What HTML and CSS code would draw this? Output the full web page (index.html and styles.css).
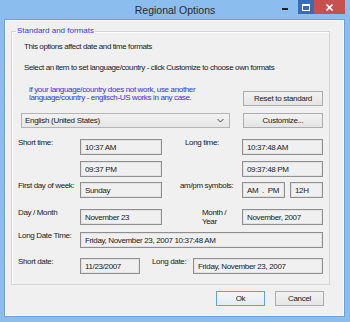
FILE: index.html
```html
<!DOCTYPE html>
<html lang="en">
<head>
    <meta charset="UTF-8">
    <title>Regional Options</title>
    <link rel="stylesheet" href="styles.css">
</head>
<body>

<div class="window">
    <div class="titlebar">
        <span></span>
        <div class="title">Regional Options</div>
        <div class="controls">
            <span class="ctl ctl-min"><i></i></span>
            <span class="ctl ctl-max">
                <svg width="8" height="7" viewBox="0 0 8 7"><rect x="0.5" y="0.5" width="7" height="6" fill="none" stroke="#fff"/><rect x="0" y="0" width="8" height="2" fill="#fff"/></svg>
            </span>
            <span class="ctl ctl-close">
                <svg width="7" height="7" viewBox="0 0 7 7"><path d="M0.5 0.5 L6.5 6.5 M6.5 0.5 L0.5 6.5" stroke="#fff" stroke-width="1.6"/></svg>
            </span>
        </div>
    </div>

    <div class="client">
        <fieldset class="group">
            <legend>Standard and formats</legend>
            <p class="note">This options affect date and time formats</p>
            <p class="note note-2">Select an item to set language/country - click Customize to choose own formats</p>

            <div class="lang-row">
                <p class="hint">if your language/country does not work, use another<br>language/country - englisch-US works in any case.</p>
                <button class="btn btn-side btn-reset">Reset to standard</button>
            </div>
            <div class="lang-row lang-row-2">
                <div class="combo">
                    <span>English (United States)</span>
                    <svg width="7" height="5" viewBox="0 0 7 5"><path d="M0.5 1 L3.5 4 L6.5 1" fill="none" stroke="#444" stroke-width="1"/></svg>
                </div>
                <button class="btn btn-side">Customize...</button>
            </div>

            <!-- Format fields -->
            <div class="row r1">
                <span class="lbl">Short time:</span>
                <div class="box">10:37 AM</div>
                <span class="lbl2 lbl-long">Long time:</span>
                <div class="box box-r">10:37:48 AM</div>
            </div>
            <div class="row r2">
                <span class="lbl"></span>
                <div class="box">09:37 PM</div>
                <span class="lbl2"></span>
                <div class="box box-r">09:37:48 PM</div>
            </div>
            <div class="row r3">
                <span class="lbl">First day of week:</span>
                <div class="box">Sunday</div>
                <span class="lbl2 lbl-ampm">am/pm symbols:</span>
                <div class="box box-ampm">AM  .  PM</div>
                <div class="box box-12">12H</div>
            </div>
            <div class="row r4">
                <span class="lbl">Day / Month</span>
                <div class="box">November 23</div>
                <span class="lbl2 lbl-my">Month /<br>Year</span>
                <div class="box box-r">November, 2007</div>
            </div>
            <div class="row r5">
                <span class="lbl">Long Date Time:</span>
                <div class="box box-wide">Friday, November 23, 2007 10:37:48 AM</div>
            </div>
            <div class="row r6">
                <span class="lbl">Short date:</span>
                <div class="box box-short">11/23/2007</div>
                <span class="lbl-ld">Long date:</span>
                <div class="box box-ld">Friday, November 23, 2007</div>
            </div>
        </fieldset>

        <div class="actions">
            <button class="btn btn-ok">Ok</button>
            <button class="btn">Cancel</button>
        </div>
    </div>
</div>

</body>
</html>
```

FILE: styles.css
```css
/* Page */
body {
    margin: 0;
    width: 350px;
    height: 322px;
    overflow: hidden;
    font-family: "Liberation Sans", Arial, sans-serif;
    font-size: 8px;
    color: #1a1a1a;
}

/* Window frame */
.window {
    width: 350px;
    height: 322px;
    background-color: #8bbdef;
    display: flex;
    flex-direction: column;
}

/* Title bar */
.titlebar {
    height: 20px;
    display: grid;
    grid-template-columns: 1fr auto 1fr;
}

.title {
    font-size: 10.5px;
    line-height: 21px;
    color: #2b2b2b;
}

.controls {
    justify-self: end;
    display: flex;
    height: 14px;
    margin-right: 5px;
}

.ctl {
    display: flex;
    align-items: center;
    justify-content: center;
}

.ctl-min {
    width: 26px;
}

.ctl-min i {
    width: 6px;
    height: 2px;
    margin-top: 4px;
    background-color: #222;
}

.ctl-max {
    width: 16px;
    background-color: #3a6cb6;
}

.ctl-close {
    width: 31px;
    background-color: #c75050;
}

/* Client area */
.client {
    flex: 1;
    margin: 0 6px 6px 5px;
    border: 1px solid #f7f9fb;
    box-shadow: 0 0 0 1px #6f9fd6;
    background-color: #f0f0f0;
}

/* Group box */
.group {
    margin: 5px 13px 0 5px;
    padding: 0 6px 10px 6px;
    border: 1px solid #d5d5d5;
    box-shadow: inset 1px 1px 0 #fff;
}

.group legend {
    margin-left: -2px;
    padding: 0 1px;
    line-height: 10px;
    color: #3535f5;
}

.note {
    margin: 6px 0 0 6px;
    line-height: 10px;
    letter-spacing: -0.4px;
}

.note-2 {
    margin-top: 11px;
}

.lang-row {
    display: flex;
    align-items: flex-start;
    justify-content: space-between;
    margin-top: 13px;
}

.lang-row-2 {
    margin-top: 7px;
}

.hint {
    margin: 0 0 0 11px;
    line-height: 8px;
    color: #3232f0;
    letter-spacing: -0.35px;
}

.combo {
    width: 209px;
    height: 15px;
    box-sizing: border-box;
    margin-left: 3px;
    padding: 0 5px 0 3px;
    display: flex;
    align-items: center;
    justify-content: space-between;
    border: 1px solid #b4b4b4;
    background: linear-gradient(#f2f2f2, #e6e6e6);
    letter-spacing: -0.3px;
}

/* Buttons */
.btn {
    height: 15px;
    box-sizing: border-box;
    padding: 0;
    border: 1px solid #acacac;
    background: linear-gradient(#f2f2f2, #e4e4e4);
    font-family: "Liberation Sans", Arial, sans-serif;
    font-size: 8px;
    letter-spacing: -0.3px;
    color: #1a1a1a;
}

.btn-side {
    width: 80px;
}

.btn-reset {
    margin-top: 5px;
}

/* Field rows */
.row {
    display: flex;
    align-items: flex-start;
    letter-spacing: -0.35px;
}

.r1 { margin-top: 11px; }
.r2 { margin-top: 6px; }
.r3 { margin-top: 5px; }
.r4 { margin-top: 11px; }
.r5 { margin-top: 6px; }
.r6 { margin-top: 10px; }

.lbl {
    width: 62px;
    flex: none;
    margin-top: -1px;
    line-height: 10px;
    white-space: nowrap;
}

.lbl2 {
    width: 80px;
    flex: none;
    box-sizing: border-box;
    margin-top: -1px;
    line-height: 10px;
    white-space: nowrap;
}

.lbl-long { padding-left: 23px; }
.lbl-ampm { padding-left: 18px; }
.lbl-my { padding-left: 40px; line-height: 9px; }

.lbl-ld {
    width: 41px;
    flex: none;
    margin: -1px 0 0 12px;
    line-height: 10px;
    white-space: nowrap;
}

.box {
    width: 82px;
    height: 16px;
    flex: none;
    box-sizing: border-box;
    padding-left: 4px;
    display: flex;
    align-items: center;
    border: 1px solid #8f8f8f;
    box-shadow: inset 0 0 0 1px #e2e2e2;
    white-space: pre;
}

.box-r { width: 81px; }
.box-ampm { width: 43px; }
.box-12 { width: 33px; margin-left: 5px; }
.box-wide { width: 243px; }
.box-short { width: 60px; }
.box-ld { width: 130px; }

/* Dialog buttons */
.actions {
    display: flex;
    justify-content: flex-end;
    gap: 10px;
    margin: 6px 19px 0 0;
}

.actions .btn {
    width: 49px;
}

.btn-ok {
    border-color: #5ea3e6;
    background: linear-gradient(#f3f7fb, #e4ecf4);
}
```
